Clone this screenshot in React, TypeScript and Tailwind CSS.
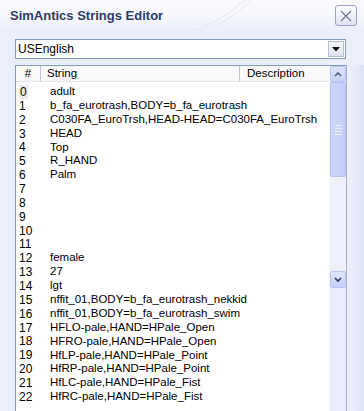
import React from "react";

const rows: [number, string][] = [
  [0, "adult"],
  [1, "b_fa_eurotrash,BODY=b_fa_eurotrash"],
  [2, "C030FA_EuroTrsh,HEAD-HEAD=C030FA_EuroTrsh"],
  [3, "HEAD"],
  [4, "Top"],
  [5, "R_HAND"],
  [6, "Palm"],
  [7, ""],
  [8, ""],
  [9, ""],
  [10, ""],
  [11, ""],
  [12, "female"],
  [13, "27"],
  [14, "lgt"],
  [15, "nffit_01,BODY=b_fa_eurotrash_nekkid"],
  [16, "nffit_01,BODY=b_fa_eurotrash_swim"],
  [17, "HFLO-pale,HAND=HPale_Open"],
  [18, "HFRO-pale,HAND=HPale_Open"],
  [19, "HfLP-pale,HAND=HPale_Point"],
  [20, "HfRP-pale,HAND=HPale_Point"],
  [21, "HfLC-pale,HAND=HPale_Fist"],
  [22, "HfRC-pale,HAND=HPale_Fist"],
];

export default function App() {
  return (
    <div
      className="w-[364px] h-[411px] overflow-hidden flex flex-col bg-[#eceefa] text-black"
      style={{ fontFamily: '"Liberation Sans", Arial, sans-serif' }}
    >
      {/* Title bar */}
      <div className="h-[31px] shrink-0 flex items-center justify-between pl-[10px] pr-[7px] bg-gradient-to-b from-[#fbfbfd] via-[#f6f7fb] to-[#eceefa] relative overflow-hidden">
        <span className="text-[13px] font-bold text-[#313a63] relative">SimAntics Strings Editor</span>
        <svg className="absolute left-[170px] top-0" width="120" height="31" viewBox="0 0 120 31">
          <path d="M20 31 C 45 25, 60 12, 75 0" stroke="#e3e5f0" strokeWidth="1" fill="none" />
          <path d="M30 31 C 55 24, 68 12, 82 0" stroke="#e6e8f2" strokeWidth="1" fill="none" />
        </svg>
        <div className="relative w-[22px] h-[21px] rounded-[3px] border border-[#9aa1c2] bg-gradient-to-b from-[#ffffff] to-[#dfe3f3] flex items-center justify-center">
          <svg width="14" height="14" viewBox="0 0 14 14">
            <path d="M2 2 L12 12 M12 2 L2 12" stroke="#6b7088" strokeWidth="1.1" fill="none" />
          </svg>
        </div>
      </div>

      {/* Body */}
      <div className="flex-1 flex flex-col pl-[15px] pt-[8px] min-h-0">
        {/* Combo */}
        <div className="w-[331px] h-[20px] border border-[#7f9db9] bg-white flex items-center justify-between pl-[2px] pr-[1px]">
          <span className="text-[12px]">USEnglish</span>
          <div className="w-[16px] h-[16px] border border-[#b6bed8] bg-gradient-to-b from-[#f7f8fc] to-[#dde2f2] flex items-center justify-center">
            <svg width="8" height="5" viewBox="0 0 8 5">
              <path d="M0 0 L8 0 L4 4.5 Z" fill="#111" />
            </svg>
          </div>
        </div>

        {/* List */}
        <div className="mt-[6px] flex-1 flex min-h-0">
          <div className="w-[332px] flex border-l border-t border-[#7f9db9] bg-white min-h-0">
            <div className="flex-1 flex flex-col min-w-0">
              {/* Header */}
              <div className="h-[16px] shrink-0 flex items-center text-[11.5px] bg-[#f9f9fa] border-b border-[#e2e2ea]">
                <div className="w-[25px] h-full flex items-center justify-center border-r border-[#c5c5cf]">#</div>
                <div className="w-[199px] h-full flex items-center pl-[6px] border-r border-[#c5c5cf]">String</div>
                <div className="flex-1 h-full flex items-center pl-[7px]">Description</div>
              </div>
              {/* Rows */}
              <div className="pt-[3px] flex flex-col">
                {rows.map(([n, s]) => (
                  <div key={n} className="h-[13.87px] flex items-center text-[11.5px] leading-none whitespace-nowrap">
                    <div className="w-[34px] pl-[3px] shrink-0 text-[12px]">
                      <span className={n === 0 ? "bg-[#ebebeb] px-[1px]" : ""}>{n}</span>
                    </div>
                    <div>{s}</div>
                  </div>
                ))}
              </div>
            </div>
            {/* Scrollbar */}
            <div className="w-[17px] shrink-0 flex flex-col bg-[#eef0fc] border-l border-[#f4f5fd]">
              <div className="h-[16px] shrink-0 rounded-[2px] border border-[#b9c5f3] bg-gradient-to-b from-[#dfe5fd] to-[#c6d1f8] flex items-center justify-center">
                <svg width="8" height="6" viewBox="0 0 8 6">
                  <path d="M1 5 L4 2 L7 5" stroke="#4d6185" strokeWidth="1.6" fill="none" />
                </svg>
              </div>
              <div className="h-[95px] shrink-0 rounded-[2px] border border-[#b5c2f0] bg-gradient-to-r from-[#cdd6fb] to-[#c3cef7] flex flex-col items-center justify-center gap-[2px]">
                <div className="w-[7px] h-px bg-[#eef1fe]" />
                <div className="w-[7px] h-px bg-[#eef1fe]" />
                <div className="w-[7px] h-px bg-[#eef1fe]" />
                <div className="w-[7px] h-px bg-[#eef1fe]" />
              </div>
              <div className="h-[94px] shrink-0" />
              <div className="h-[17px] shrink-0 rounded-[2px] border border-[#b9c5f3] bg-gradient-to-b from-[#dfe5fd] to-[#c6d1f8] flex items-center justify-center">
                <svg width="8" height="6" viewBox="0 0 8 6">
                  <path d="M1 1 L4 4 L7 1" stroke="#2c3a5c" strokeWidth="1.6" fill="none" />
                </svg>
              </div>
              <div className="flex-1 bg-[#e9ecfb]" />
            </div>
          </div>
          {/* Right frame */}
          <div className="w-[18px] shrink-0 flex">
            <div className="w-px bg-[#a7aed0]" />
            <div className="flex-1 bg-gradient-to-r from-[#eef0fb] via-[#e7eafa] to-[#dde1f5]" />
          </div>
        </div>
      </div>
    </div>
  );
}
